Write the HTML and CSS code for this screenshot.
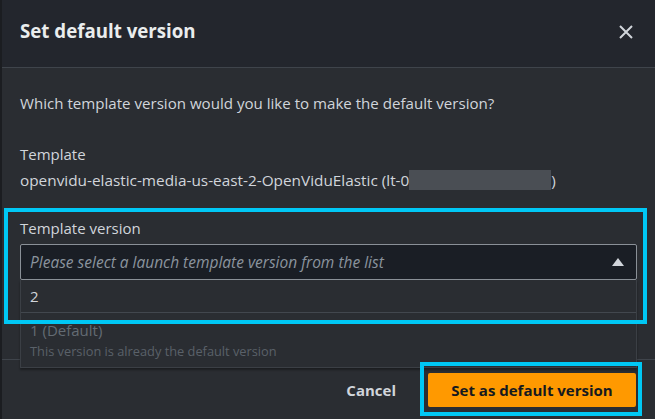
FILE: index.html
```html
<!DOCTYPE html>
<html>
<head>
<meta charset="utf-8">
<link rel="stylesheet" href="styles.css">
</head>
<body>
<div class="modal">
  <div class="header">
    <h2 class="title">Set default version</h2>
    <button class="close" aria-label="Close">
      <svg width="16" height="16" viewBox="0 0 16 16"><path d="M2 2 L14 14 M14 2 L2 14" stroke="#d1d5db" stroke-width="2" fill="none"/></svg>
    </button>
  </div>
  <div class="body">
    <p class="question">Which template version would you like to make the default version?</p>
    <div class="field">
      <div class="label">Template</div>
      <div class="value">openvidu-elastic-media-us-east-2-OpenViduElastic (lt-0<span class="redact"></span>)</div>
    </div>
    <div class="field field-version">
      <div class="label">Template version</div>
      <div class="select-wrap">
        <div class="select">
          <span class="placeholder">Please select a launch template version from the list</span>
          <svg class="caret" width="12" height="8" viewBox="0 0 12 8"><path d="M6 0 L12 8 L0 8 Z" fill="#d1d5db"/></svg>
        </div>
        <div class="dropdown">
          <div class="option">2</div>
          <div class="option disabled">
            <div>1 (Default)</div>
            <div class="hint">This version is already the default version</div>
          </div>
        </div>
      </div>
    </div>
  </div>
  <div class="footer">
    <button class="btn-link">Cancel</button>
    <button class="btn-primary">Set as default version</button>
  </div>
  <div class="highlight hl-field"></div>
  <div class="highlight hl-button"></div>
</div>
</body>
</html>
```
FILE: styles.css
```css
* { box-sizing: border-box; }
html, body { margin: 0; padding: 0; }
body {
  background: #2a2d32;
  font-family: "Open Sans", "Noto Sans", sans-serif;
  color: #d1d5db;
  width: 655px;
  height: 419px;
  overflow: hidden;
}
.modal {
  position: relative;
  height: 419px;
  background: #2a2d32;
  border-left: 2px solid #1b1d21;
  display: flex;
  flex-direction: column;
}
.header {
  height: 68px;
  background: #23262d;
  border-bottom: 1px solid #3f444b;
  display: flex;
  align-items: flex-start;
  justify-content: space-between;
  padding: 18px 21px 0 18px;
  flex: none;
}
.title {
  margin: 0;
  font-size: 18.7px;
  line-height: 26px;
  font-weight: 700;
  color: #eaeded;
}
.close {
  background: none;
  border: 0;
  padding: 0;
  margin-top: 6px;
  width: 16px;
  height: 16px;
  display: flex;
  cursor: pointer;
}
.body {
  padding: 25px 18px 0 18px;
  flex: 1;
  font-size: 15px;
  line-height: 20px;
}
.question { margin: 0 0 31px 0; font-size: 15.1px; }
.label { line-height: 20px; }
.value {
  margin-top: 6px;
  display: flex;
  align-items: center;
  font-size: 15.35px;
}
.redact {
  display: inline-block;
  width: 142px;
  height: 20px;
  background: #4a4e54;
}
.field-version { margin-top: 28px; }
.select-wrap {
  position: relative;
  margin-top: 6px;
}
.select {
  height: 36px;
  border: 1px solid #8a9097;
  border-radius: 2px;
  background: #1a1e25;
  display: flex;
  align-items: center;
  justify-content: space-between;
  padding: 0 12px 0 9px;
}
.placeholder {
  font-style: italic;
  color: #8b949e;
  font-size: 15.5px;
}
.dropdown {
  position: absolute;
  left: 0;
  right: 0;
  top: 36px;
  height: 88px;
  background: #2a2d32;
  border: 1px solid #3b3f45;
  border-top: 0;
  box-shadow: 0 2px 2px rgba(0,0,0,0.35);
  z-index: 2;
}
.option {
  padding: 6px 9px;
  height: 33px;
  border-bottom: 1px solid #42474e;
}
.option.disabled {
  border-bottom: 0;
  height: auto;
  color: #636b73;
  padding-top: 7px;
}
.hint {
  font-size: 12.8px;
  line-height: 16px;
  margin-top: 3px;
  color: #5a6169;
}
.footer {
  flex: none;
  height: 60px;
  border-top: 1px solid #3f444b;
  display: flex;
  justify-content: flex-end;
  align-items: flex-start;
  padding: 13px 19px 0 0;
  gap: 26px;
}
.btn-link {
  background: none;
  border: 0;
  font-family: inherit;
  font-size: 15px;
  font-weight: 700;
  color: #d1d5db;
  height: 34px;
  padding: 0 6px;
}
.btn-primary {
  background: #ff9900;
  border: 0;
  border-radius: 2px;
  font-family: inherit;
  font-size: 15px;
  font-weight: 700;
  color: #16191f;
  height: 34px;
  width: 208px;
  padding: 0;
}
.highlight {
  position: absolute;
  border: 4px solid #00c8f5;
  pointer-events: none;
  z-index: 3;
}
.hl-field { left: 2px; top: 208px; width: 643px; height: 116px; }
.hl-button { left: 418px; top: 362px; width: 222px; height: 54px; }
```
